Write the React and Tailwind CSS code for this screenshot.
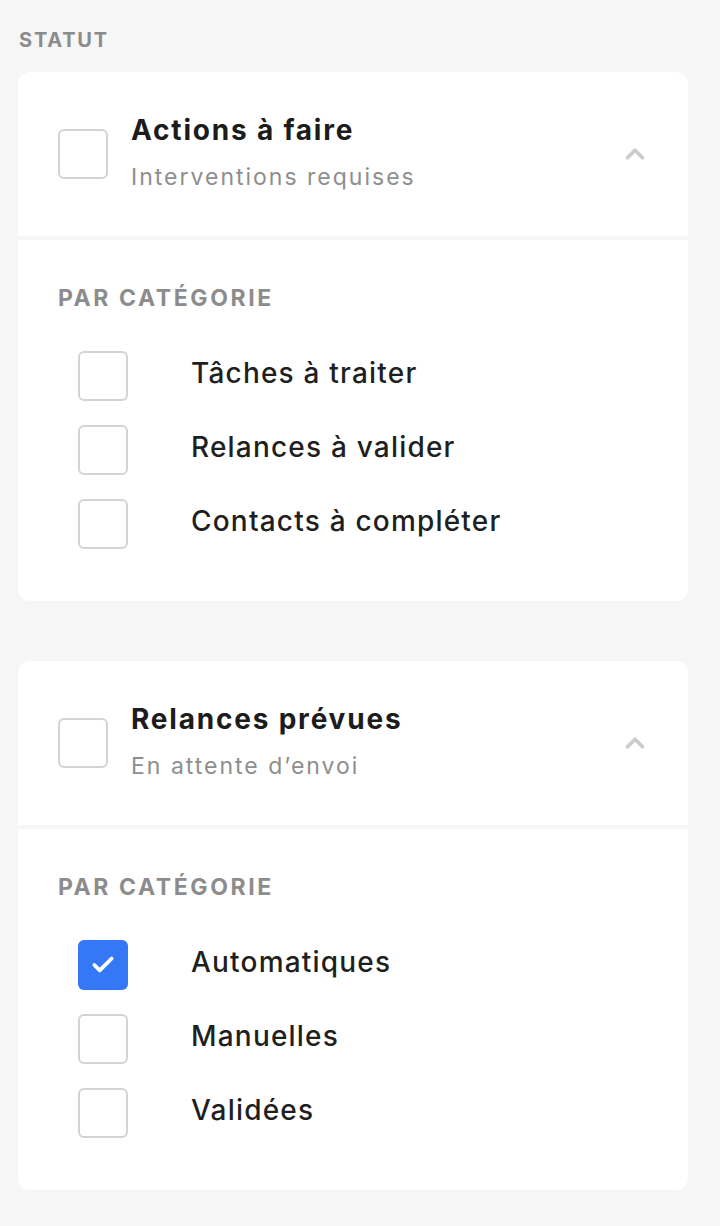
import React, { useState } from 'react';
import { ChevronUp, Check } from 'lucide-react';

const SECTIONS = [
  {
    title: 'Actions à faire',
    subtitle: 'Interventions requises',
    items: [
      { label: 'Tâches à traiter', checked: false },
      { label: 'Relances à valider', checked: false },
      { label: 'Contacts à compléter', checked: false },
    ],
  },
  {
    title: 'Relances prévues',
    subtitle: 'En attente d\u2019envoi',
    items: [
      { label: 'Automatiques', checked: true },
      { label: 'Manuelles', checked: false },
      { label: 'Validées', checked: false },
    ],
  },
];

function Box({ checked, onClick }) {
  return (
    <button
      onClick={onClick}
      className={
        checked
          ? 'w-[50px] h-[50px] shrink-0 rounded-[6px] bg-[#3478f6] flex items-center justify-center'
          : 'w-[50px] h-[50px] shrink-0 rounded-[6px] border-2 border-[#d4d4d4] bg-white'
      }
    >
      {checked && <Check size={26} strokeWidth={3.5} className="text-white" />}
    </button>
  );
}

function Section({ section }) {
  const [items, setItems] = useState(section.items);
  const [open, setOpen] = useState(true);

  const toggle = (i) => {
    setItems(items.map((it, idx) => (idx === i ? { ...it, checked: !it.checked } : it)));
  };

  return (
    <div className="bg-white rounded-xl overflow-hidden">
      {/* Header */}
      <div className="h-[168px] flex items-center px-10 border-b-4 border-[#f6f6f6]">
        <Box checked={false} />
        <div className="ml-[23px] flex-1 -mt-[4px]">
          <div className="text-[28px] leading-[34px] font-bold tracking-[1.8px] text-[#1c1c1c]">{section.title}</div>
          <div className="text-[23px] leading-[30px] tracking-[2px] text-[#8e8e8e] mt-[15px]">{section.subtitle}</div>
        </div>
        <button onClick={() => setOpen(!open)} className="text-[#cccccc] mr-[-2px]">
          <ChevronUp size={30} strokeWidth={3} />
        </button>
      </div>

      {/* Body */}
      {open && (
        <div className="px-10 pt-[44px] pb-[52px]">
          <div className="text-[23px] leading-[28px] font-bold tracking-[2.6px] text-[#8c8c8c]">PAR CATÉGORIE</div>
          <div className="mt-[39px] flex flex-col gap-[24px] pl-5">
            {items.map((it, i) => (
              <div key={it.label} className="flex items-center">
                <Box checked={it.checked} onClick={() => toggle(i)} />
                <span className="ml-[63px] -mt-[6px] text-[28px] tracking-[1.2px] text-[#1f1f1f] font-medium">{it.label}</span>
              </div>
            ))}
          </div>
        </div>
      )}
    </div>
  );
}

export default function App() {
  return (
    <div className="min-h-screen bg-[#f6f6f6] px-[18px] pt-[28px] pb-10" style={{ fontFamily: 'Inter, sans-serif' }}>
      <div className="pl-[1px] text-[20px] leading-[24px] font-bold tracking-[1.8px] text-[#8c8c8c] mb-[20px]">STATUT</div>
      <div className="w-[670px] flex flex-col gap-[60px]">
        {SECTIONS.map((s) => (
          <Section key={s.title} section={s} />
        ))}
      </div>
    </div>
  );
}
